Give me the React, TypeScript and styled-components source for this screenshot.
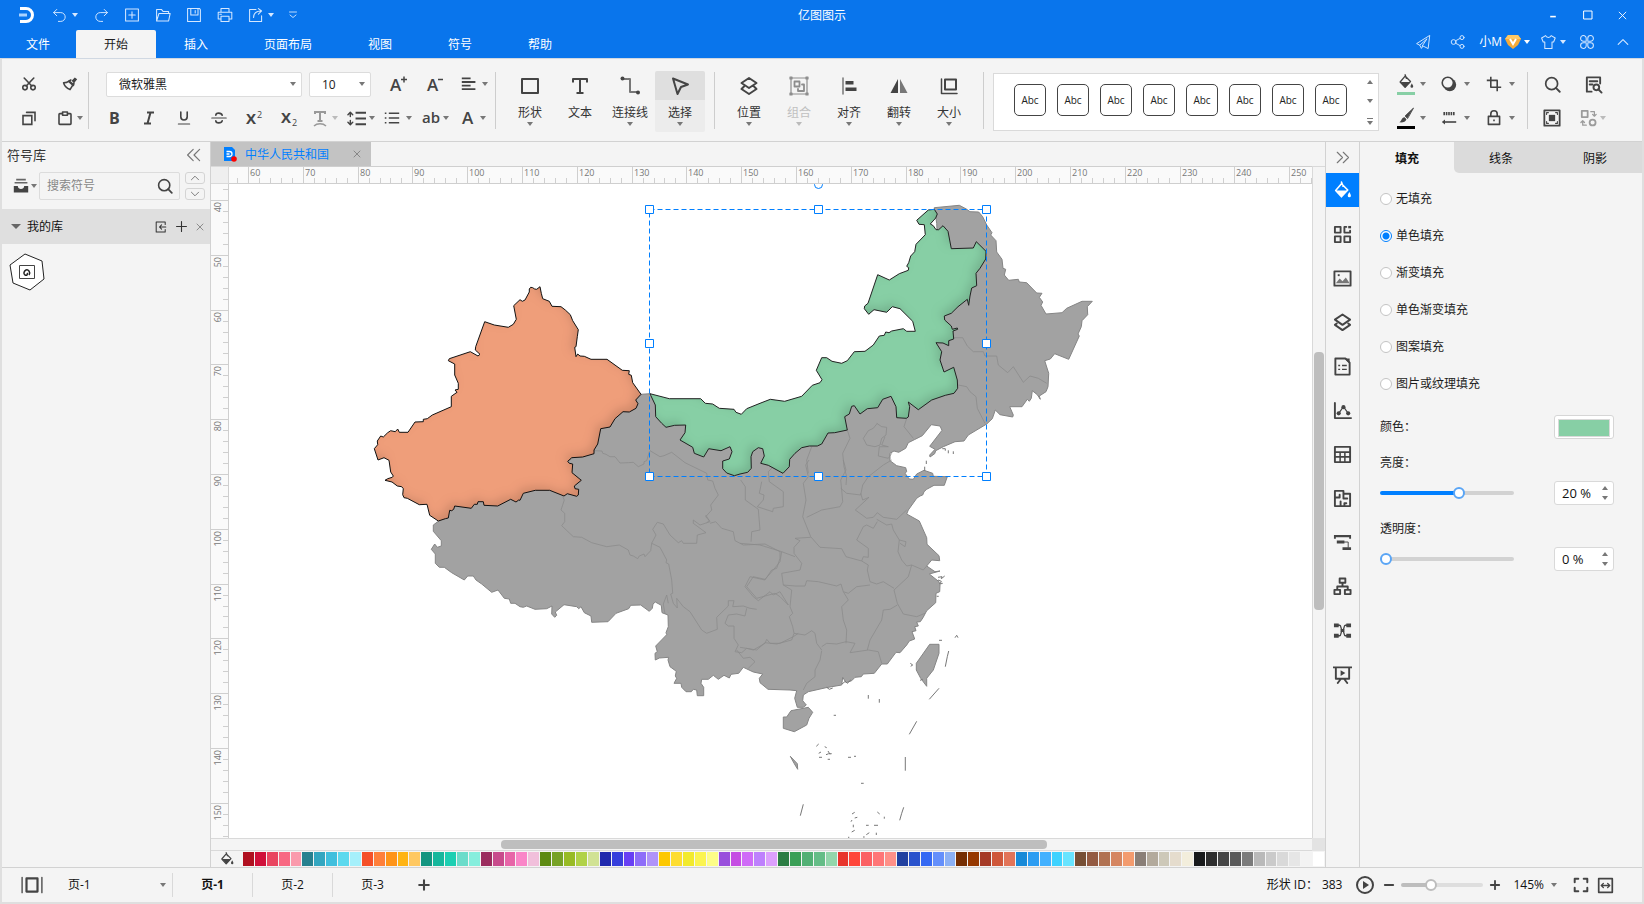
import React, { useLayoutEffect, useRef, useState } from "react";
import styled, { createGlobalStyle, css } from "styled-components";

const INK = "#444";
const LINE = "#d2d2d2";
const PANEL = "#f4f4f4";
const BLUE = "#0975ec";
const ACCENT = "#007fff";

const GlobalStyle = createGlobalStyle`
  * { box-sizing: border-box; }
  body {
    margin: 0;
    background: ${PANEL};
    color: #1c1c1c;
    font: 12px/16px "Open Sans", "Noto Sans CJK SC", sans-serif;
  }
  button, input, select { font: inherit; color: inherit; margin: 0; padding: 0; }
  button { border: 0; background: none; cursor: pointer; }
  svg { display: block; flex: none; }
`;

/* ---------- icons ---------- */

const P = (d: string, extra: React.SVGProps<SVGPathElement> = {}) => <path d={d} {...extra} />;
const solid = { fill: "currentColor", stroke: "none" };

const icons: Record<string, React.ReactNode> = {
  undo: <g strokeWidth="1.2">{P("M6 3 2 7l4 4M2 7h9a5.500 5.500 0 0 1 0 11H8")}</g>,
  redo: <g strokeWidth="1.2">{P("M14 3l4 4-4 4M18 7H9a5.500 5.500 0 0 0 0 11h3")}</g>,
  addBox: <g strokeWidth="1.300">{P("M2 2.500h16v15H2zM10 6v8M6 10h8")}</g>,
  folder: <g strokeWidth="1.300">{P("M2 17.500V3h6l2 2.500h7V8M2 17.500 5 8h14l-2 9.500z")}</g>,
  save: <g strokeWidth="1.300">{P("M2 2h15l1 1.500V18H2zM6 2v8h9V2M11.500 4.500v3")}</g>,
  print: <g strokeWidth="1.300">{P("M5 6V2h10v4M5 15H1.500V6.500h17V15H15M5 11.500h10V18H5zM3.500 9h2")}</g>,
  exportFile: <g strokeWidth="1.300">{P("M10 3H2v15h15v-7M7 13c0-5 3-8 10-8M13 2l4 3-4 4")}</g>,
  more: <g strokeWidth="1.800">{P("M3 4h14M4 10l6 5 6-5")}</g>,
  plane: <g strokeWidth="1.200">{P("M18 2 2 12l4 2 2 4 2-3 6 3zM6 14l9-8-6 9")}</g>,
  share: (
    <g strokeWidth="1.200">
      <circle cx="15" cy="4.500" r="2.500" /><circle cx="4.500" cy="10" r="3" /><circle cx="15" cy="15.500" r="2.500" />
      {P("m7 8.500 5.500-3M7 11.500l5.500 3")}
    </g>
  ),
  shirt: <g strokeWidth="1.300">{P("M7 2 2 5l2 5h2v8h9v-8h2l2-5-5-3c-1 3-6 3-7 0z")}</g>,
  clover: (
    <g strokeWidth="1.300">
      {P("M9 9H5.500A3.500 3.500 0 1 1 9 5.500zM11 9h3.500A3.500 3.500 0 1 0 11 5.500zM9 11H5.500A3.500 3.500 0 1 0 9 14.500zM11 11h3.500A3.500 3.500 0 1 1 11 14.500z")}
    </g>
  ),
  chevUp: <g strokeWidth="1.400">{P("M4 13l6-6 6 6")}</g>,
  chevDown: <g strokeWidth="1.400">{P("M4 7l6 6 6-6")}</g>,
  scissors: (
    <g>
      <circle cx="5" cy="14.500" r="2.800" /><circle cx="15" cy="14.500" r="2.800" />
      {P("M4 2.500 13.500 12.500M16 2.500 6.500 12.500")}
    </g>
  ),
  brush: (
    <g>
      {P("M11 5 6 8l-4 .5c1 4 4 7 8 8.500l5-8")}
      {P("M9 5l7 6-2 2-7-6zM12 6l4-4 3 2-4 5z", solid)}
    </g>
  ),
  copy: <g>{P("M2.500 7h11v11h-11zM7 3h10.500v10.500", { strokeLinejoin: "miter" })}</g>,
  paste: <g>{P("M6 4.500H3.500a1 1 0 0 0-1 1V17a1 1 0 0 0 1 1h13a1 1 0 0 0 1-1V5.500a1 1 0 0 0-1-1H14M7 2.500h6v4H7z")}</g>,
  strike: (
    <g>
      {P("M14 6.500C13 3 6 3 6 6.500M14 13.500C13 17 6 17 6 13.500")}
      {P("M1 10h18", { strokeWidth: 1.500 })}
    </g>
  ),
  underline: <g>{P("M6 2.500v6a4 4 0 0 0 8 0v-6")}{P("M3 17.500h14", { strokeWidth: 1.500 })}</g>,
  alignText: <g strokeWidth="2.200" strokeLinecap="butt">{P("M1 3h11M1 7.500h17M1 12h11M1 16.500h17")}</g>,
  spacing: <g>{P("M9 4h11M9 10h11M9 16h11", { strokeLinecap: "butt" })}{P("M3.500 4v4M3.500 12v4M1 6l2.500-2.500L6 6M1 14l2.500 2.500L6 14", { strokeWidth: 1.500 })}</g>,
  list: <g>{P("M6 4h13M6 10h13M6 16h13", { strokeLinecap: "butt" })}{P("M1 4h2M1 10h2M1 16h2", { strokeLinecap: "butt" })}</g>,
  shape: <g>{P("M2 3h16v14H2z")}</g>,
  letterT: <g strokeLinecap="butt">{P("M3 6.500V3h14v3.500M10 3v14M6.500 17h7")}</g>,
  connector: (
    <g>
      {P("M4 3h6v13h7", { stroke: "#777", strokeDasharray: "3 1 30" })}
      <circle cx="2.500" cy="2.500" r="2" {...solid} /><circle cx="18" cy="16.500" r="2" {...solid} />
    </g>
  ),
  cursor: <g>{P("M3 2.500 18 8.500l-7 2.500-3.500 7z")}</g>,
  layers: <g>{P("M10 2l7.500 5L10 12 2.500 7zM5 10.500 2.500 13l7.500 5 7.500-5-2.500-2.500")}</g>,
  stack: <g>{P("M10 1.500 18 7l-8 5.500L2 7zM4 11l-2 1.500 8 5.500 8-5.500-2-1.500")}</g>,
  group: (
    <g strokeWidth="1.200">
      {P("M2 2h16v16H2zM1 1h2v2H1zM17 1h2v2h-2zM1 17h2v2H1zM17 17h2v2h-2z")}
      {P("M5.500 5.500h5v5h-5zM13 8.500h2v6.500H9v-2", { strokeWidth: 1.800 })}
    </g>
  ),
  alignObj: <g>{P("M4 2v16", { stroke: "#777", strokeWidth: 1.500 })}{P("M6.500 5h8v3.500h-8zM6.500 11.500h11V15h-11z", solid)}</g>,
  flip: <g>{P("M9 3v14H1.500z", solid)}{P("M11 3v14h7.500z", { fill: "#777", stroke: "none" })}</g>,
  resize: <g>{P("M6 3.500h11v10H6z")}{P("M2.500 3v14.500H18", { strokeWidth: 1.500 })}</g>,
  bucket: (
    <g strokeWidth="1.500">
      {P("M9 2l1.500 4M9 3.500 3.500 10l5.500 6 6-6.500L9.500 4")}
      {P("M4 10h10.500L9 16z", solid)}{P("M16.500 11.500c1 2 1.500 2.500 1.500 3.500a1.500 1.500 0 0 1-3 0c0-1 .5-1.500 1.500-3.500z", solid)}
    </g>
  ),
  shadow: <g><circle cx="11" cy="11" r="8" {...solid} /><circle cx="8.500" cy="8.500" r="7" fill={PANEL} /></g>,
  crop: <g strokeLinecap="butt">{P("M6 1v13h13M1 5.500h13V19")}</g>,
  pen: <g>{P("M18 1.500 9 10l2.500 2.500z", { fill: "currentColor", strokeWidth: 1 })}{P("M8.500 11.500l2 2c-1 3-4 4-8 3.500 3-1 2-5 6-5.500z", solid)}</g>,
  lineStyle: <g strokeLinecap="butt">{P("M3 4.500h15", { strokeDasharray: "2 1", strokeWidth: 4 })}{P("M4 15h15")}{P("M1 15l4-3v6z", solid)}</g>,
  lock: <g>{P("M3 8h14v10H3zM6 8V5a4 4 0 0 1 8 0v3")}{P("M9 12h2v2H9z", solid)}</g>,
  search: <g><circle cx="9" cy="9" r="7" />{P("M14 14l4.500 4.500", { strokeWidth: 2.200 })}</g>,
  docSearch: <g>{P("M8 17.500H3v-15h14V9M6 6.500h8M6 10h3")}<circle cx="13" cy="13" r="3" />{P("M15 15l3.500 3.500")}</g>,
  selectAll: <g>{P("M1.500 1.500h17v17h-17z")}{P("M6.500 6.500h7v7h-7z", solid)}{P("M4 6V4h2M14 4h2v2M16 14v2h-2M6 16H4v-2", { strokeWidth: 1.200 })}</g>,
  replace: <g>{P("M2 2h6.500v7H2z")}<circle cx="14" cy="15" r="3.300" />{P("M12 3h4v5M14 6l2 2 2-2M7 18H3v-5M1 15l2-2 2 2", { strokeWidth: 1.400 })}</g>,
  collapse: <g strokeWidth="1.500">{P("M9 3 2 10l7 7M17 3l-7 7 7 7")}</g>,
  expand: <g strokeWidth="1.500">{P("M3 3l7 7-7 7M11 3l7 7-7 7")}</g>,
  tray: <g>{P("M1 10h5c0 5 8 5 8 0h5v8H1z", solid)}{P("M4 2h12M2 6h16", { strokeLinecap: "butt", stroke: "#666" })}</g>,
  importLib: <g strokeWidth="1.700">{P("M17 6V1.500H2v17h15V14M18 10H7.500M11 6.500 7.500 10l3.500 3.500")}</g>,
  plus: <g>{P("M10 1v18M1 10h18")}</g>,
  close: <g strokeWidth="2">{P("M2.500 2.500l15 15M17.500 2.500l-15 15")}</g>,
  symbols: <g>{P("M2 2h6v6H2zM12 2h2M12 2v6h6V6M2 12h6v6H2zM12 12h6v6h-6z")}{P("M16 1h3v2.500h-3z", solid)}</g>,
  image: <g>{P("M1.500 2.500h17v15h-17z")}{P("M3 15l4-5 3 3 3.500-4 4 6z", { fill: "#777", stroke: "none" })}{P("M5 5.500h2v2H5z", solid)}</g>,
  page: <g>{P("M2.500 1.500H13l4.500 4.500v12.500h-15z")}{P("M5.500 9h2M9.500 9h5M5.500 13h2M9.500 13h5", { strokeLinecap: "butt", strokeWidth: 1.500 })}{P("M12 1.500h5.500V7z", solid)}</g>,
  chart: <g>{P("M2 2v16h17")}{P("M6 13l5-7 5 7", { strokeWidth: 1.200 })}<circle cx="6" cy="13" r="2.200" {...solid} /><circle cx="11" cy="6.500" r="2.200" {...solid} /><circle cx="16" cy="13" r="2.200" {...solid} /></g>,
  table: <g>{P("M2 2h16v16H2z")}{P("M2 7.500h16M2 12.500h16M7.500 7.500V18M12.500 7.500V18", { strokeWidth: 1.600 })}</g>,
  plan: <g>{P("M2 2h9v3h7v13H2zM2 9h5V6M11 5v5h4M8 18v-5M12 18v-3h2")}</g>,
  timeline: <g>{P("M1 2h18v4h-2V4.500H3V6H1zM4 8h8v3H4zM10 15h9v3h-9z", solid)}{P("M12 9.500h4V15", { strokeWidth: 1 })}</g>,
  org: <g>{P("M7 1.500h6V6H7zM1.500 13.500h6V18h-6zM12.500 13.500h6V18h-6zM10 6v4M4.500 13v-3h11v3")}</g>,
  mind: <g>{P("M3 4.500h4c2 0 1 5.500 3 5.500s1-5.500 3-5.500h4M3 15.500h4c2 0 1-5.500 3-5.500s1 5.500 3 5.500h4", { strokeWidth: 1.400 })}{P("M1 2.500h5v4H1zM14 2.500h5v4h-5zM1 13.500h5v4H1zM14 13.500h5v4h-5zM8 8.500h4v3H8z", solid)}</g>,
  present: <g>{P("M0 2.500h20M3 2.500v12h14v-12M8 15l-3 4M12 15l3 4")}{P("M8 5.500l5 3-5 3z", solid)}</g>,
  pages: <g>{P("M5 4h10v12H5z")}{P("M1 3v14M19 3v14", { strokeWidth: 1.200 })}</g>,
  play: <g><circle cx="10" cy="10" r="8" />{P("M8 6l6 4-6 4z", solid)}</g>,
  minus: <g strokeWidth="2.600">{P("M4 10h12")}</g>,
  add: <g strokeWidth="2.600">{P("M10 4v12M4 10h12")}</g>,
  full: <g strokeWidth="2.200">{P("M3 7V3h4M13 3h4v4M17 13v4h-4M7 17H3v-4")}</g>,
  fitWidth: <g>{P("M2 2h16v16H2z")}{P("M5 10h10M7.500 7.500 5 10l2.500 2.500M12.500 7.500 15 10l-2.500 2.500", { strokeWidth: 1.600 })}</g>,
  minimise: <g strokeLinecap="butt">{P("M3 14h14", { strokeWidth: 4 })}</g>,
  maximise: <g strokeWidth="2">{P("M2 2h16v16H2z")}</g>,
};

const Glyph = styled.text`
  fill: currentColor;
  stroke: none;
  font-family: "Open Sans", sans-serif;
`;

const LetterBox = styled.svg`
  width: 20px;
  height: 20px;
  overflow: visible;
`;

const Icon = ({ name, size = 16 }: { name: string; size?: number }) => (
  <svg width={size} height={size} viewBox="0 0 20 20" fill="none" stroke="currentColor" strokeWidth="2" strokeLinejoin="round" strokeLinecap="round" aria-hidden="true">
    {icons[name]}
  </svg>
);

const LetterIcon = ({ children }: { children: React.ReactNode }) => (
  <LetterBox viewBox="0 0 20 20" aria-hidden="true">{children}</LetterBox>
);

const Caret = styled.span<{ $up?: boolean; $size?: number }>`
  flex: none;
  width: 0;
  height: 0;
  border: ${(p) => p.$size ?? 3}px solid transparent;
  ${(p) =>
    p.$up
      ? css`border-top: 0; border-bottom: ${p.$size ?? 4}px solid currentColor;`
      : css`border-bottom: 0; border-top: ${p.$size ?? 4}px solid currentColor;`}
`;

/* ---------- header ---------- */

const Page = styled.div`
  min-height: 100vh;
  display: flex;
  flex-direction: column;
`;

const Header = styled.header`
  background: ${BLUE};
  color: #fff;
`;

const TitleRow = styled.div`
  display: grid;
  grid-template-columns: 1fr auto 1fr;
  align-items: center;
  height: 30px;
`;

const AppTitle = styled.span`
  padding-top: 2px;
`;

const QuickBar = styled.div`
  display: flex;
  align-items: center;
  gap: 15px;
  padding-left: 19px;
  color: #d5e8ff;
`;

const QuickButton = styled.button<{ $w?: number }>`
  display: flex;
  align-items: center;
  justify-content: center;
  gap: 4px;
  width: ${(p) => (p.$w ? p.$w + "px" : "auto")};
  height: 20px;
`;

const WindowButtons = styled.div`
  display: flex;
  justify-content: flex-end;
  align-items: center;
  padding-right: 4px;
  height: 28px;
`;

const MenuRow = styled.div`
  display: flex;
  justify-content: space-between;
  height: 28px;
`;

const MenuTabs = styled.nav`
  display: flex;
`;

const MenuTab = styled.button<{ $active?: boolean; $narrow?: boolean }>`
  padding: 2px ${(p) => (p.$narrow ? 26 : 28)}px 0;
  border-radius: 2px 2px 0 0;
  background: ${(p) => (p.$active ? PANEL : "transparent")};
  color: ${(p) => (p.$active ? "#222" : "#fff")};
`;

const UserBar = styled.div`
  display: flex;
  align-items: center;
  gap: 10px;
  padding: 0 6px 4px 0;
  color: #d5e8ff;
`;

const UserButton = styled(QuickButton)`
  gap: 3px;
  color: #fff;
`;

/* ---------- ribbon ---------- */

const Frame = styled.div`
  flex: 1;
  display: flex;
  flex-direction: column;
  border: 2px solid #dfdfdf;
  border-top: 1px solid #d0d8e2;
`;

const Ribbon = styled.div`
  display: flex;
  align-items: flex-start;
  height: 83px;
  padding: 8px 35px 0 17px;
  border-bottom: 1px solid ${LINE};
  color: ${INK};
`;

const Separator = styled.span`
  flex: none;
  width: 1px;
  height: 57px;
  margin-top: 5px;
  background: #cdcdcd;
`;

const ToolGrid = styled.div<{ $cols: string; $gap: number; $pad: string }>`
  display: grid;
  grid-template-columns: ${(p) => p.$cols};
  grid-auto-rows: 34px;
  column-gap: ${(p) => p.$gap}px;
  padding: ${(p) => p.$pad};
  align-items: center;
`;

const FontTools = styled.div`
  padding: 0 7px 0 15px;
`;

const ToolRow = styled.div`
  display: flex;
  align-items: center;
  height: 34px;
`;

const ToolSet = styled.div<{ $gap: number; $left?: number }>`
  display: flex;
  gap: ${(p) => p.$gap}px;
  margin-left: ${(p) => p.$left ?? 0}px;
`;

const ToolButton = styled.button<{ $gap?: number; $off?: boolean }>`
  display: flex;
  align-items: center;
  justify-content: center;
  gap: ${(p) => p.$gap ?? 2}px;
  min-width: 20px;
  height: 24px;
  color: ${(p) => (p.$off ? "#9b9b9b" : INK)};
  ${Caret} { color: ${(p) => (p.$off ? "#bbb" : "#777")}; }
`;

const Swatched = styled.span<{ $bar: string }>`
  display: flex;
  flex-direction: column;
  align-items: center;
  gap: 1px;
  width: 20px;
  &::after { content: ""; width: 18px; height: 3px; background: ${(p) => p.$bar}; }
`;

const SelectBox = styled.label<{ $w: number }>`
  position: relative;
  display: flex;
  align-items: center;
  width: ${(p) => p.$w}px;
  height: 25px;
  margin-left: ${(p) => (p.$w > 100 ? 2 : 7)}px;
  border: 1px solid #dcdcdc;
  border-radius: 2px;
  background: #fff;
  ${Caret} { position: absolute; right: 5px; color: #777; pointer-events: none; }
`;

const Select = styled.select`
  appearance: none;
  width: 100%;
  height: 23px;
  padding: 1px 12px 0;
  border: 0;
  background: transparent;
  color: #222;
`;

const BigTools = styled.div`
  display: flex;
  padding: 4px 9px 0;
`;

const BigButton = styled.button<{ $active?: boolean; $off?: boolean }>`
  display: flex;
  flex-direction: column;
  align-items: center;
  width: 50px;
  height: 61px;
  border-radius: 2px;
  background: ${(p) => (p.$active ? "linear-gradient(#dfdfdf 29px, #ececec 29px)" : "none")};
  color: ${(p) => (p.$off ? "#c0c0c0" : "#333")};
  svg { margin: 5px 0 9px; color: ${(p) => (p.$off ? "#8d8d8d" : INK)}; }
  ${Caret} { margin-top: 1px; color: ${(p) => (p.$off ? "#bbb" : "#777")}; }
`;

const Gallery = styled.div`
  flex: 1;
  display: flex;
  justify-content: space-between;
  height: 58px;
  margin: 6px 16px 0 9px;
  padding: 0 5px 0 20px;
  border: 1px solid #dadada;
  background: #fff;
`;

const GalleryItems = styled.div`
  display: flex;
  align-items: center;
  gap: 11px;
  padding-bottom: 4px;
`;

const StyleItem = styled.button`
  width: 32px;
  height: 32px;
  border: 1px solid ${INK};
  border-radius: 5px;
  background: #fff;
  color: #222;
  font-size: 10px;
`;

const GallerySteps = styled.div`
  display: flex;
  flex-direction: column;
  justify-content: space-between;
  align-items: center;
  padding: 6px 0 5px;
  color: #777;
  button { display: flex; justify-content: center; width: 6px; }
  button:last-child { padding-top: 2px; border-top: 1px solid #777; }
`;

/* ---------- body ---------- */

const Body = styled.div`
  flex: 1;
  display: grid;
  grid-template-columns: 209px minmax(0, 1fr) 35px 282px;
`;

const Library = styled.aside`
  border-right: 1px solid ${LINE};
`;

const LibraryHead = styled.div`
  display: flex;
  align-items: center;
  justify-content: space-between;
  height: 26px;
  padding: 0 8px 0 5px;
  font-size: 13px;
  color: #333;
  button { color: #777; }
`;

const SearchRow = styled.div`
  display: flex;
  align-items: center;
  gap: 2px;
  height: 41px;
  padding: 4px 5px 9px 11px;
`;

const SearchBox = styled.label`
  display: flex;
  align-items: center;
  flex: 1;
  min-width: 0;
  height: 28px;
  margin-right: 3px;
  padding: 0 6px 0 7px;
  border: 1px solid #dcdcdc;
  border-radius: 2px;
  color: ${INK};
  input {
    flex: 1;
    min-width: 0;
    border: 0;
    outline: 0;
    background: none;
  }
  input::placeholder { color: #888; opacity: 1; }
`;

const StepPair = styled.div`
  display: flex;
  flex-direction: column;
  gap: 4px;
  button {
    display: flex;
    align-items: center;
    justify-content: center;
    width: 20px;
    height: 12px;
    border: 1px solid #d4d4d4;
    border-radius: 3px;
    color: #666;
  }
`;

const LibraryBar = styled.div`
  display: flex;
  align-items: center;
  gap: 9px;
  height: 35px;
  padding: 0 6px 0 9px;
  background: #dfdfdf;
  color: #333;
  ${Caret} { color: #666; }
  button:last-child { color: #777; }
`;

const LibraryName = styled.span`
  flex: 1;
  margin-left: -3px;
  color: #111;
`;

const LibraryItem = styled.button`
  display: block;
  margin: 9px 7px;
`;

/* ---------- document ---------- */

const Doc = styled.main`
  display: grid;
  grid-template-columns: 18px minmax(0, 1fr) 13px;
  grid-template-rows: 24px 18px minmax(0, 1fr) 13px 16px;
`;

const DocTabs = styled.div`
  grid-column: 1 / -1;
  display: flex;
`;

const DocTab = styled.div`
  display: flex;
  align-items: center;
  gap: 8px;
  width: 160px;
  padding: 0 9px 0 12px;
  background: #c3c3c3;
  color: ${ACCENT};
  span { flex: 1; padding-top: 1px; }
  button { color: #777; padding: 0 1px; }
`;

const Corner = styled.div`
  border: 1px solid #d9d9d9;
  border-left: 0;
  background: #efefef;
`;

const RulerBox = styled.div`
  min-width: 0;
  min-height: 0;
  overflow: hidden;
  background: #fafafa;
`;

const RulerSvg = styled.svg`
  width: 100%;
  height: 100%;
  stroke: #cfcfcf;
  text { fill: #777; stroke: none; font-size: 9px; font-family: "Open Sans", sans-serif; }
`;

const Sheet = styled.svg`
  width: 100%;
  height: 100%;
  overflow: hidden;
  background: #fff;
`;

const VTrack = styled.div`
  grid-column: 3;
  grid-row: 2 / 4;
  padding: 185px 1px 0;
  border-top: 1px solid #d9d9d9;
  border-left: 1px solid #d9d9d9;
`;

const HTrack = styled.div`
  grid-column: 1 / 3;
  grid-row: 4;
  padding: 1px 0 1px 290px;
  border-top: 1px solid #d9d9d9;
  border-bottom: 1px solid #d9d9d9;
`;

const Thumb = styled.div<{ $w: string; $h: string }>`
  width: ${(p) => p.$w};
  height: ${(p) => p.$h};
  border-radius: 4px;
  background: #bebebe;
`;

const TrackCorner = styled.div`
  grid-column: 3;
  grid-row: 4;
  background: #e3e3e3;
`;

const Palette = styled.div`
  grid-column: 1 / -1;
  display: flex;
  align-items: center;
  gap: 1px;
  padding-right: 1px;
  color: ${INK};
  svg { margin: 0 7px 0 8px; }
`;

const Chip = styled.button<{ $c: string }>`
  flex: 1;
  height: 14px;
  background: ${(p) => p.$c};
`;

/* ---------- right side ---------- */

const Rail = styled.nav`
  display: flex;
  flex-direction: column;
  border: solid ${LINE};
  border-width: 0 1px;
  color: ${INK};
`;

const RailButton = styled.button<{ $kind?: "toggle" | "active" }>`
  display: flex;
  align-items: center;
  justify-content: center;
  height: ${(p) => (p.$kind === "toggle" ? 31 : p.$kind === "active" ? 34 : 44)}px;
  margin-bottom: ${(p) => (p.$kind === "active" ? 5 : 0)}px;
  background: ${(p) => (p.$kind === "active" ? ACCENT : "none")};
  color: ${(p) => (p.$kind === "active" ? "#fff" : p.$kind === "toggle" ? "#777" : INK)};
`;

const PanelTabs = styled.div`
  display: grid;
  grid-template-columns: repeat(3, 1fr);
  height: 31px;
`;

const PanelTab = styled.button<{ $active?: boolean; $first?: boolean }>`
  padding-top: 2px;
  background: ${(p) => (p.$active ? "none" : "#dbdbdb")};
  border-bottom-left-radius: ${(p) => (p.$first ? 5 : 0)}px;
  font-weight: ${(p) => (p.$active ? 700 : 400)};
  color: #111;
`;

const RadioList = styled.div`
  display: flex;
  flex-direction: column;
  gap: 17px;
  padding: 16px 20px 0;
`;

const RadioLabel = styled.label`
  display: flex;
  align-items: center;
  gap: 4px;
  height: 20px;
  input {
    appearance: none;
    width: 12px;
    height: 12px;
    border: 1px solid #c4c4c4;
    border-radius: 50%;
    background: #fff;
  }
  input:checked {
    border-color: ${ACCENT};
    background: radial-gradient(circle, ${ACCENT} 3px, #fff 4px);
  }
`;

const Fields = styled.div`
  display: flex;
  flex-direction: column;
  padding: 21px 28px 0 20px;
`;

const Field = styled.div`
  display: flex;
  align-items: center;
  justify-content: space-between;
  height: 24px;
`;

const FieldLabel = styled.label`
  display: flex;
  align-items: center;
  height: 42px;
  padding-top: 6px;
`;

const ColorButton = styled.button`
  width: 60px;
  height: 24px;
  padding: 3px;
  border: 1px solid #d6d6d6;
  border-radius: 3px;
  background: #fff;
  &::before {
    content: "";
    display: block;
    height: 16px;
    border: 1px solid #d9d9d9;
    background: #87cfa5;
  }
`;

const Range = styled.input<{ $fill: string; $rest: string; $ring: string; $w: number }>`
  appearance: none;
  width: ${(p) => p.$w}px;
  height: 12px;
  background: none;
  &::-webkit-slider-runnable-track {
    height: 4px;
    border-radius: 2px;
    background: linear-gradient(to right, ${(p) => p.$fill} var(--part), ${(p) => p.$rest} var(--part));
  }
  &::-webkit-slider-thumb {
    appearance: none;
    width: 12px;
    height: 12px;
    margin-top: -4px;
    border: 2px solid ${(p) => p.$ring};
    border-radius: 50%;
    background: #fff;
  }
`;

const SpinBox = styled.div`
  display: flex;
  justify-content: space-between;
  width: 60px;
  height: 24px;
  padding: 0 5px 0 7px;
  border: 1px solid #d9d9d9;
  border-radius: 3px;
  background: #fff;
  input { width: 34px; border: 0; background: none; font-size: 13px; color: #111; outline: 0; }
  div { display: flex; flex-direction: column; justify-content: space-between; padding: 4px 0; color: #777; }
  button { display: flex; }
`;

/* ---------- status bar ---------- */

const Status = styled.footer`
  display: flex;
  align-items: center;
  height: 35px;
  padding: 0 28px 0 19px;
  border-top: 1px solid ${LINE};
  color: #111;
`;

const PageSelect = styled.label`
  position: relative;
  display: flex;
  align-items: center;
  width: 130px;
  height: 24px;
  border-right: 1px solid #d9d9d9;
  ${Caret} { position: absolute; right: 6px; color: #777; pointer-events: none; }
  select { appearance: none; width: 100%; padding-left: 25px; border: 0; background: none; }
`;

const PageTab = styled.button<{ $active?: boolean; $last?: boolean }>`
  width: 80px;
  height: 24px;
  border-right: 1px solid ${(p) => (p.$last ? "transparent" : "#d9d9d9")};
  font-weight: ${(p) => (p.$active ? 700 : 400)};
`;

const PlainButton = styled.button<{ $before?: number; $after?: number }>`
  display: flex;
  align-items: center;
  margin: 0 ${(p) => p.$after ?? 0}px 0 ${(p) => p.$before ?? 0}px;
  color: ${INK};
`;

const StatusRight = styled.div`
  display: flex;
  align-items: center;
  gap: 5px;
  margin-left: auto;
  ${Caret} { color: #777; }
`;

const ShapeId = styled.span`
  display: flex;
  gap: 4px;
  margin-right: 8px;
`;

const ZoomValue = styled.button`
  display: flex;
  align-items: center;
  gap: 7px;
  margin: 0 10px 0 6px;
`;

/* ---------- map ---------- */

type Section = [number, number, string];

/* Each section lists points in thirds of a pixel, counted from its own origin. */
const toPath = (sections: Section[], close = true) =>
  sections
    .flatMap(([ox, oy, pts]) =>
      pts.trim().split(/\s+/).map((p) => {
        const [x, y] = p.split(",").map(Number);
        return `${(ox + x / 3).toFixed(1)} ${(oy + y / 3).toFixed(1)}`;
      })
    )
    .reduce((d, p, i) => d + (i ? "L" : "M") + p, "") + (close ? "Z" : "");

const west = (s: string): Section => [360, 190, s];
const north = (s: string): Section => [740, 190, s];
const southWest = (s: string): Section => [400, 480, s];
const southEast = (s: string): Section => [740, 460, s];

const xinjiang = toPath([
  west(`508,297 512,292 518,293 524,297 530,298 540,290 544,310 548,326 568,334 576,349 603,350 616,360 631,374 638,392 655,419 652,440 648,470 644,472 648,500 653,492 660,498 673,499 693,508 741,508 787,541 808,542 806,553 814,556 818,578 843,613 827,630 834,641 828,655 808,666 789,665 765,686 750,711 722,716 713,762 702,780 702,791 668,801 635,803 623,814 628,820 638,822 636,848 664,871 643,888 645,896 656,898 655,915 650,919 622,911 612,918 569,901 526,901 490,910 480,931 476,930 468,936 452,928 413,948 372,946 370,935 354,935 352,943 343,943 334,955 284,948 281,958 275,962 269,961 265,984 256,986 235,993 209,976 201,943 178,944 142,925 132,923 128,914 130,896 125,890 112,888 96,876 75,871 83,866 97,862 100,858 92,846 87,811 72,803 54,810 43,776 53,764 52,753 62,738 70,741 83,728 92,722 106,725 113,717 118,727 144,727 165,696 190,695 190,688 202,686 217,675 274,650 274,619 291,607 285,600 295,598 295,580 284,555 284,522 265,512 268,506 331,485 354,498 360,493 346,480 347,470 374,395 403,405 445,412 460,403 469,388 461,347 480,329 487,334 495,330 508,306`),
]);

const innerMongolia = toPath([
  west(`870,611 928,626 1022,626 1036,640 1058,642 1078,655 1122,658 1128,667 1144,673 1160,656 1200,640`),
  north(`91,628 134,634 185,619 217,586 240,578 246,569 229,541 245,503 260,503 276,514 305,520 322,512 343,485 375,484 400,465 418,438 433,436 437,426 447,428 455,423 490,416 500,424 526,424 518,394 480,356 457,350 440,367 402,359 386,373 373,356 374,348 384,340 413,254 448,270 478,251 505,241 506,233 500,229 506,218 512,198 524,185 528,163 556,134 553,104 537,103 530,91 565,60 583,58 592,72 587,84 571,102 580,107 588,119 596,119 609,107 624,124 634,176 700,174 709,155 738,184 737,207 720,235 708,250 710,287 695,294 690,318 686,346 682,328 654,350 634,370 613,378 614,390 634,408 637,418 652,414 653,418 639,423 641,447 626,452 626,467 609,459 588,458 605,485 600,510 612,546 641,532 652,570 653,595 642,610 616,616 575,630 535,659 505,636 509,650 505,681 499,685 470,683 468,650 453,619 428,628 413,653 382,656 360,672 343,647 335,649 328,672 314,680 322,720 284,728 264,729 245,762 232,768 208,768 185,773 165,790 149,808 148,830 129,850 120,845 85,826 62,820 73,798 68,776 55,773 38,785 33,800 34,835 23,847 0,852`),
  west(`1123,857 1100,849 1088,836 1088,813 1108,807 1116,785 1110,770 1083,782 1046,776 1031,801 1003,790 998,772 960,750 975,728 977,705 944,706 918,712 905,700 887,680 886,645 872,616`),
]);

const mainland = toPath([
  west(`843,613 870,611 890,640`),
  north(`60,720 300,600 500,500 600,300 590,100 583,53 658,46 679,57 690,65 716,66 728,80 740,105 756,128 752,135 768,152 770,186 786,208 789,235 797,238 793,255 806,271 835,268 838,276 860,278 890,309 906,310 898,322 908,336 903,346 918,372 966,368 980,355 1026,334 1057,334 1042,350 1043,374 1026,392 1024,410 1014,432 1018,438 988,504 986,508 944,491 931,507 914,512 926,550 924,590 918,605 898,618 901,628 892,614 877,602 874,625 868,634 862,628 846,650 809,650 820,675 818,681 780,674 766,660 757,686 740,702 685,735 672,753 645,755 610,770 587,782 584,791 570,801 569,795 585,778 569,769 606,721 600,708 574,704 547,737 523,749 505,758 497,775 476,787 462,783 450,790 450,812 470,827 497,833 500,845 495,850 508,867 520,868 530,852 552,841 578,850 580,859 622,860 613,886 582,886 560,898 552,905 548,915 540,918 530,925 505,960`),
  southEast(`500,162 538,183 560,233 561,253 597,287 599,302 575,300 560,318 585,335 600,333 568,342 597,365 600,375 599,395 588,400 587,428 560,452 549,473 541,485 530,486 535,498 524,500 528,512 516,515 524,537 508,543 500,555 480,578 468,577 442,612 425,612 403,640 370,642 364,650 345,652 335,662 318,668 308,652 305,675 258,683 205,695 190,705 188,722 199,735 190,742 172,742 164,715 170,692 150,690 84,688 60,668 58,655 68,642 40,636 10,622`),
  southWest(`1030,562 1016,580 993,583 988,594 972,586 955,598 940,586 925,598 905,598 903,610 911,622 911,647 892,647 890,630 880,628 874,635 858,635 845,622 843,610 822,610 830,595 826,588 829,574 810,560 804,540 806,532 778,534 766,540 765,520 772,515 767,498 800,464 798,458 805,440 804,405 786,398 784,376 766,366 759,372 757,385 748,394 722,375 692,376 686,386 648,400 624,425 575,427 573,408 553,398 543,380 536,386 530,380 492,374 466,396 470,406 464,412 455,402 456,378 440,386 405,388 380,378 370,382 360,380 345,370 332,370 328,357 313,355 294,330 275,337 245,312 228,300 220,288 203,288 193,300 155,278 133,262 118,262 106,250 106,222 94,208 104,192 112,202 124,198 124,182 100,154 100,135 115,124`),
  west(`300,920 600,870 620,818 690,760 780,640`),
]);

const islands = [
  southEast(`569,553 597,553 597,580 580,630 560,655 560,679 542,655 529,630 529,610`),
  southEast(`130,771 140,771 153,752 205,742 218,757 207,775 200,795 163,815 130,805`),
  southEast(`151,889 172,911 173,928 163,911`),
].map((s) => toPath([s]));

const provinceBorders = [
  west(`702,782 726,783 728,790 738,793 750,800 765,800 780,819 805,818 820,817 835,830 852,822 852,815 860,812 868,785 870,782 900,800 912,797 935,787 975,818 1040,850 1043,870 1058,873 1065,895 1075,915 1052,945 1055,960 1037,980 1048,992 1040,998`),
  southWest(`917,105 930,125 900,135 880,120 880,130 918,158 892,165 890,190 850,190 845,182 835,188 810,165 790,132 772,127 758,148 768,165 755,190 752,212 735,230 732,222 718,228 713,236 700,228 690,225 685,210 658,195 620,200 575,188 545,172 520,170 485,137 494,125 494,100 483,90 493,60 488,50`),
  southWest(`755,190 780,202 800,240 798,248 806,252 815,300 818,340 812,342 820,370 832,384 830,355 850,380 870,395 905,450 920,460 952,448 950,412 985,378 985,362 1002,362 998,380 1030,378 1050,385 1070,388`),
  southWest(`805,370 800,345 790,372 795,402`),
  southWest(`1040,385 1035,408 1010,402 985,405 975,430 985,438 1002,438 1002,475 1015,495 1005,515 1025,518 1040,505 1060,510 1095,490 1100,478 1110,490 1140,490 1180,470 1195,460`),
  southWest(`1010,510 1030,535 1050,532 1065,545 1045,565`),
  southWest(`930,130 947,125 965,145 1000,155 1005,182 1030,195 1095,192 1140,215 1140,235 1130,265 1115,270 1095,300 1050,290 1035,320 1060,350 1075,362 1110,335 1120,345 1140,335 1165,375`),
  southWest(`1022,0 1036,20 1036,60 1075,88 1080,150 1055,155 1053,185`),
  southEast(`65,65 58,100 72,105 70,120 52,140 98,155 100,145 130,140 130,95 88,65 85,35 100,20`),
  southEast(`207,0 197,15 205,50 190,70 198,120 188,170 212,230 240,262 305,266 318,290 365,303 370,290 385,292 385,265 350,240 370,200 380,195 400,205 412,185`),
  southEast(`310,0 318,30 302,60 305,90 308,125 300,140 245,150 200,172`),
  southEast(`302,85 320,100 362,105 368,75 385,50 430,15 455,0`),
  southEast(`362,100 368,120 387,112 346,150 380,175 400,172 412,158 430,172 470,178 500,150`),
  southEast(`410,178 440,195 455,192 460,210 478,240 474,275 485,300 500,318 515,315 550,330 560,318`),
  southEast(`478,240 498,245 495,260 480,250`),
  southEast(`515,315 505,350 462,390 472,430 490,462 530,470 555,460`),
  southEast(`365,303 385,315 382,330 390,365 410,372 430,365 462,385`),
  southEast(`212,232 165,235 180,242 162,262 162,280 185,310 180,330 125,340 130,375 165,378 195,378 200,362 235,365 290,378 303,372 310,395 325,400 350,380 390,375`),
  southEast(`130,375 155,390 150,440 158,460 148,470 158,500 162,520 195,525 215,512 225,520 230,550 245,570`),
  southEast(`310,395 325,420 305,440 310,480 320,510 318,550`),
  southEast(`245,560 260,550 290,552 318,545 345,550 330,578 385,570 415,575 425,610`),
  southEast(`472,435 450,448 430,450 425,480 390,540 382,570`),
  southEast(`245,572 240,600 225,630 225,650 200,670 190,690`),
  southEast(`0,562 50,570 75,548 110,552 155,540 162,520`),
  southEast(`125,275 120,305 100,330 75,358 40,350 20,380 50,415 105,400 120,410 145,435`),
  southEast(`0,250 60,255 125,275 165,290`),
  north(`640,443 668,443 682,468 700,485 730,485 735,498 770,498 775,525 803,548 820,530 850,577 870,558 895,565 920,580`),
  north(`655,585 680,590 690,605 708,620 712,655 735,700`),
  north(`500,685 492,710 520,745`),
  north(`410,700 425,710 440,712 438,735 425,745 420,765 405,770 380,765 370,745 385,722 400,715 412,700`),
  north(`435,740 425,765 445,770 418,770 415,798 445,805 455,790`),
  north(`322,720 330,745 308,790 312,830 320,860 318,885`),
  north(`215,770 200,810 205,850`),
].map((s) => toPath([s], false));

const islets = [
  southEast(`626,573 622,590 616,620`), southEast(`597,685 568,718`), southEast(`530,784 508,823`),
  southEast(`496,891 496,932`), southEast(`491,1042 485,1060 479,1081`), southEast(`190,1033 181,1067`),
  southEast(`645,533 650,526 654,533`), southEast(`597,541 606,541`), southEast(`385,705 385,716`),
  southEast(`418,717 418,728`), southEast(`281,766 288,766`), southEast(`229,859 236,852`),
  southEast(`254,860 260,863`), southEast(`236,880 243,876`), southEast(`237,892 246,892`),
  southEast(`258,884 266,881 275,881`), southEast(`264,873 270,883`), southEast(`263,898 270,898`),
  southEast(`324,892 333,892`), southEast(`342,889 348,889`), southEast(`363,970 371,970`),
  southEast(`336,1062 344,1057`), southEast(`344,1074 352,1072`), southEast(`333,1085 336,1080`),
  southEast(`340,1094 340,1102`), southEast(`412,1056 419,1062`), southEast(`433,1070 433,1076`),
  southEast(`378,1096 386,1096`), southEast(`402,1096 414,1096`), southEast(`335,1116 344,1111`),
  southEast(`409,1118 409,1125`), southEast(`369,1131 374,1131`), southEast(`379,1124 388,1118`),
  southEast(`324,1132 328,1132`), southEast(`511,610 518,615 512,619`), southEast(`540,661 548,658`),
  southEast(`594,352 606,350 604,356 614,348`), southEast(`594,360 604,364 600,372 608,370`),
  southEast(`590,409 596,409`), southEast(`306,672 316,664 322,670 332,660`), southEast(`260,682 268,688 278,684`),
  north(`607,776 616,776 616,782`), north(`625,781 625,790`), north(`640,784 640,792`),
  north(`559,812 559,822`), north(`554,830 554,842`),
].map((s) => toPath([s], false));

const HANDLES: [number, number][] = [
  [649, 209], [818, 209], [986, 209], [649, 343], [986, 343], [649, 476], [818, 476], [986, 476],
];

const MapDrawing = () => (
  <Sheet role="img" aria-label="中华人民共和国">
    <defs>
      <filter id="innerShade" x="-5%" y="-5%" width="110%" height="110%">
        <feGaussianBlur in="SourceAlpha" stdDeviation="5" />
        <feOffset dx="-4" dy="-4" result="soft" />
        <feComposite in="SourceAlpha" in2="soft" operator="out" result="rim" />
        <feFlood floodColor="#000" floodOpacity="0.26" />
        <feComposite in2="rim" operator="in" result="shade" />
        <feMerge>
          <feMergeNode in="SourceGraphic" />
          <feMergeNode in="shade" />
        </feMerge>
      </filter>
    </defs>
    <g transform="translate(-229 -184)" strokeLinejoin="round" fill="none">
      <g fill="#a2a2a2" stroke="#858585">
        <path d={mainland} />
        {islands.map((d, i) => <path key={i} d={d} />)}
      </g>
      <g stroke="#8b8b8b" strokeWidth="0.8">{provinceBorders.map((d, i) => <path key={i} d={d} />)}</g>
      <g stroke="#777">{islets.map((d, i) => <path key={i} d={d} />)}</g>
      <path d={xinjiang} fill="#ef9e7a" filter="url(#innerShade)" />
      <path d={xinjiang} stroke="#111" />
      <path d={innerMongolia} fill="#87cfa5" filter="url(#innerShade)" />
      <path d={innerMongolia} stroke="#222" />
      <g stroke={ACCENT}>
        <rect x="649.5" y="209.5" width="337" height="267" strokeDasharray="5 3" />
        <circle cx="818.500" cy="184.500" r="4" fill="#fff" />
        {HANDLES.map(([x, y]) => (
          <rect key={`${x}-${y}`} x={x - 3.5} y={y - 3.5} width="8" height="8" fill="#fff" />
        ))}
      </g>
    </g>
  </Sheet>
);

/* ---------- rulers ---------- */

const STEP = 10.96;

const Ruler = ({ vertical }: { vertical?: boolean }) => {
  const box = useRef<HTMLDivElement>(null);
  const [length, setLength] = useState(0);
  useLayoutEffect(() => {
    const el = box.current!;
    const measure = () => setLength(vertical ? el.clientHeight : el.clientWidth);
    measure();
    window.addEventListener("resize", measure);
    return () => window.removeEventListener("resize", measure);
  }, [vertical]);

  const start = vertical ? 16 : 19;
  const first = vertical ? 40 : 60;
  const count = Math.floor((length - start) / STEP) + 2;
  const ticks = Array.from({ length: Math.max(0, count) }, (_, i) => i - 1);
  return (
    <RulerBox ref={box}>
      <RulerSvg aria-hidden="true">
        {vertical ? <path d={`M17.5 0V${length}`} /> : <path d={`M0 .5H${length}M0 17.5H${length}`} />}
        {ticks.map((i) => {
          const at = Math.round(start + i * STEP) + 0.5;
          const from = i % 5 === 0 ? 0 : 12;
          return <path key={i} d={vertical ? `M${from} ${at}H18` : `M${at} ${from}V18`} />;
        })}
        {ticks.filter((i) => i >= 0 && i % 5 === 0 && start + i * STEP + 20 < length).map((i) => {
          const at = Math.round(start + i * STEP);
          const label = first + i * 2;
          return vertical ? (
            <text key={i} transform={`translate(10 ${at + 2}) rotate(-90)`} textAnchor="end">{label}</text>
          ) : (
            <text key={i} x={at + 2} y="10">{label}</text>
          );
        })}
      </RulerSvg>
    </RulerBox>
  );
};

/* ---------- data ---------- */

const MENUS = ["文件", "开始", "插入", "页面布局", "视图", "符号", "帮助"];
const RAIL: [string, string][] = [
  ["symbols", "符号"], ["image", "图片"], ["stack", "图层"], ["page", "页面"], ["chart", "图表"], ["table", "表格"],
  ["plan", "平面图"], ["timeline", "时间线"], ["org", "组织结构"], ["mind", "思维导图"], ["present", "演示"],
];
const FILLS = ["无填充", "单色填充", "渐变填充", "单色渐变填充", "图案填充", "图片或纹理填充"];
const SWATCHES = (
  "b01020 d0103a e94560 f86882 fa9aac 27808f 33a6c0 40bfdd 5cd9ee a5f0fb f55028 ff7f3a ff9418 ffb414 ffc861 " +
  "139580 16b79c 1ccfb2 6bdcca 86eedd 9b2c5e c84b8c e765a8 fa86c8 f1bfdb 5d8a12 77a226 98bb25 b1d248 d1e294 " +
  "1f28ad 363fdc 683ff4 8e6df9 b093f9 fdc800 fedd30 f2ea2c fbf44f fdfd88 994fdc c54de3 cf6bf7 be80fd dca0fd " +
  "2b7d43 3a9f56 52b074 65bd87 93d6ab e8342c ff463a fb6063 ff7677 ff9088 2140a0 2952cc 3569f3 648ffb 8bb0f5 " +
  "752e03 963800 a53a26 cf573a e27458 188ad8 2c9df2 42b1ff 3ed2ff 68e4ff 774f35 945b42 b17252 d58560 f39b6e " +
  "8a7f77 b3aa9c cdc8b8 e5dccd f3eedc 191a1b 2e2e2e 454545 5a5a5a 7b7b7b b9b9b9 cacaca d9d9d9 e6e6e6 f3f3f3 ffffff"
).split(" ");

const Tool = ({ label, icon, caret, off, gap, children }: {
  label: string; icon?: string; caret?: boolean; off?: boolean; gap?: number; children?: React.ReactNode;
}) => (
  <ToolButton aria-label={label} $off={off} $gap={gap}>
    {icon ? <Icon name={icon} size={16} /> : children}
    {caret && <Caret />}
  </ToolButton>
);

const Big = ({ label, icon, caret = true, active, off }: {
  label: string; icon: string; caret?: boolean; active?: boolean; off?: boolean;
}) => (
  <BigButton $active={active} $off={off}>
    <Icon name={icon} size={20} />
    {label}
    {caret && <Caret />}
  </BigButton>
);

const Amount = ({ id, label, value, position, onChange }: {
  id: string; label: string; value: number; position: number; onChange: (n: number) => void;
}) => (
  <>
    <FieldLabel htmlFor={id}>{label}</FieldLabel>
    <Field>
      <Range
        id={id} type="range" min={0} max={100} value={position} onChange={(e) => onChange(Number(e.target.value))}
        $fill={ACCENT} $rest="#d2d2d2" $ring="#5aa5f5" $w={134}
        style={{ "--part": `${position}%` } as React.CSSProperties}
      />
      <SpinBox>
        <input aria-label={label} value={`${value} %`} readOnly />
        <div>
          <button aria-label="增加"><Caret $up /></button>
          <button aria-label="减少"><Caret /></button>
        </div>
      </SpinBox>
    </Field>
  </>
);

const Logo = () => (
  <svg width="18" height="18" viewBox="0 0 18 18" fill="none" stroke="#fff" strokeWidth="3" aria-hidden="true">
    <path d="M1 2.500h6a6.500 6.500 0 0 1 0 13H1" />
    <path d="M0 9h8" stroke="#a9d2ff" />
  </svg>
);

export default function App() {
  const [fill, setFill] = useState(1);
  const [light, setLight] = useState(60);
  const [alpha, setAlpha] = useState(0);
  const [zoom, setZoom] = useState(33);

  return (
    <Page>
      <GlobalStyle />
      <Header>
        <TitleRow>
          <QuickBar>
            <Logo />
            <QuickButton aria-label="撤销"><Icon name="undo" /><Caret /></QuickButton>
            <QuickButton aria-label="重做"><Icon name="redo" /></QuickButton>
            <QuickButton aria-label="新建"><Icon name="addBox" /></QuickButton>
            <QuickButton aria-label="打开"><Icon name="folder" /></QuickButton>
            <QuickButton aria-label="保存"><Icon name="save" /></QuickButton>
            <QuickButton aria-label="打印"><Icon name="print" /></QuickButton>
            <QuickButton aria-label="导出"><Icon name="exportFile" /><Caret /></QuickButton>
            <QuickButton aria-label="更多" $w={8}><Icon name="more" size={10} /></QuickButton>
          </QuickBar>
          <AppTitle>亿图图示</AppTitle>
          <WindowButtons>
            <QuickButton $w={35} aria-label="最小化"><Icon name="minimise" size={8} /></QuickButton>
            <QuickButton $w={35} aria-label="最大化"><Icon name="maximise" size={10} /></QuickButton>
            <QuickButton $w={35} aria-label="关闭"><Icon name="close" size={9} /></QuickButton>
          </WindowButtons>
        </TitleRow>
        <MenuRow>
          <MenuTabs>
            {MENUS.map((m, i) => <MenuTab key={m} $active={i === 1} $narrow={i === 0}>{m}</MenuTab>)}
          </MenuTabs>
          <UserBar>
            <QuickButton $w={28} aria-label="发送"><Icon name="plane" /></QuickButton>
            <QuickButton $w={22} aria-label="分享"><Icon name="share" /></QuickButton>
            <UserButton>
              小M
              <svg width="16" height="16" viewBox="0 0 16 16" aria-hidden="true">
                <path d="M3 1h10l3 4-3 6-5 4-5-4-3-6z" fill="#f6ab3a" />
                <path d="M3 1h10l3 4H0z" fill="#ffc864" />
                <path d="M5 5l3 5 3-5" fill="none" stroke="#fff" strokeWidth="2" />
              </svg>
              <Caret />
            </UserButton>
            <QuickButton aria-label="皮肤"><Icon name="shirt" /><Caret /></QuickButton>
            <QuickButton $w={22} aria-label="应用"><Icon name="clover" /></QuickButton>
            <QuickButton $w={30} aria-label="收起"><Icon name="chevUp" /></QuickButton>
          </UserBar>
        </MenuRow>
      </Header>

      <Frame>
        <Ribbon>
          <ToolGrid $cols="20px 28px" $gap={17} $pad="0 4px 0 0">
            <Tool label="剪切" icon="scissors" />
            <Tool label="格式刷" icon="brush" />
            <Tool label="复制" icon="copy" />
            <Tool label="粘贴" icon="paste" caret gap={4} />
          </ToolGrid>
          <Separator />
          <FontTools>
            <ToolRow>
              <SelectBox $w={196}><Select aria-label="字体"><option>微软雅黑</option></Select><Caret /></SelectBox>
              <SelectBox $w={62}><Select aria-label="字号"><option>10</option></Select><Caret /></SelectBox>
              <ToolSet $gap={17} $left={16}>
                <Tool label="增大字号">
                  <LetterIcon><Glyph x="3" y="17" fontSize="17" fontWeight="600">A</Glyph><path d="M14 5.500h6M17 2.500v6" stroke={INK} strokeWidth="1.500" /></LetterIcon>
                </Tool>
                <Tool label="减小字号">
                  <LetterIcon><Glyph x="3" y="17" fontSize="17" fontWeight="600">A</Glyph><path d="M14 5.500h5" stroke={INK} strokeWidth="1.500" /></LetterIcon>
                </Tool>
                <Tool label="对齐文本" icon="alignText" caret gap={5} />
              </ToolSet>
            </ToolRow>
            <ToolRow>
              <ToolSet $gap={15}>
                <Tool label="加粗"><LetterIcon><Glyph x="5" y="16" fontSize="16" fontWeight="700">B</Glyph></LetterIcon></Tool>
                <Tool label="斜体">
                  <LetterIcon><path d="M8 4.500h7M5 15.500h7M11.500 4.500l-3 11" stroke={INK} strokeWidth="2" /></LetterIcon>
                </Tool>
                <Tool label="下划线" icon="underline" />
                <Tool label="删除线" icon="strike" />
                <Tool label="上标"><LetterIcon><Glyph x="2" y="16" fontSize="15" fontWeight="700">X</Glyph><Glyph x="13" y="10" fontSize="9">2</Glyph></LetterIcon></Tool>
                <Tool label="下标"><LetterIcon><Glyph x="2" y="15" fontSize="15" fontWeight="700">X</Glyph><Glyph x="13" y="18" fontSize="9">2</Glyph></LetterIcon></Tool>
              </ToolSet>
              <ToolSet $gap={9} $left={11}>
                <Tool label="文字路径" caret off>
                  <LetterIcon><path d="M5 6V4h10v2M10 4v9M7.500 13h5" fill="none" stroke="#999" strokeWidth="2" /><path d="M4 18c3-3 9-3 12 0" fill="none" stroke="#999" strokeWidth="1.500" /></LetterIcon>
                </Tool>
                <Tool label="行距" caret gap={3}><Icon name="spacing" size={19} /></Tool>
                <Tool label="项目符号" caret gap={6} icon="list" />
                <Tool label="大小写" caret><LetterIcon><Glyph x="1" y="15" fontSize="15" fontWeight="600">ab</Glyph></LetterIcon></Tool>
                <Tool label="字体颜色" caret><LetterIcon><Glyph x="4" y="16" fontSize="17" fontWeight="600">A</Glyph></LetterIcon></Tool>
              </ToolSet>
            </ToolRow>
          </FontTools>
          <Separator />
          <BigTools>
            <Big label="形状" icon="shape" />
            <Big label="文本" icon="letterT" caret={false} />
            <Big label="连接线" icon="connector" />
            <Big label="选择" icon="cursor" active />
          </BigTools>
          <Separator />
          <BigTools>
            <Big label="位置" icon="layers" />
            <Big label="组合" icon="group" off />
            <Big label="对齐" icon="alignObj" />
            <Big label="翻转" icon="flip" />
            <Big label="大小" icon="resize" />
          </BigTools>
          <Separator />
          <Gallery>
            <GalleryItems>
              {Array.from({ length: 8 }, (_, i) => <StyleItem key={i}>Abc</StyleItem>)}
            </GalleryItems>
            <GallerySteps>
              <button aria-label="上一行"><Caret $up /></button>
              <button aria-label="下一行"><Caret /></button>
              <button aria-label="展开样式"><Caret /></button>
            </GallerySteps>
          </Gallery>
          <ToolGrid $cols="31px 31px 31px" $gap={14} $pad="0 11px 0 0">
            <Tool label="填充" caret gap={4}><Swatched $bar="#87cfa5"><Icon name="bucket" size={18} /></Swatched></Tool>
            <Tool label="阴影" caret icon="shadow" gap={7} />
            <Tool label="裁剪" caret icon="crop" gap={7} />
            <Tool label="线条颜色" caret gap={4}><Swatched $bar="#000"><Icon name="pen" size={18} /></Swatched></Tool>
            <Tool label="线型" caret icon="lineStyle" gap={7} />
            <Tool label="锁定" caret icon="lock" gap={7} />
          </ToolGrid>
          <Separator />
          <ToolGrid $cols="20px 28px" $gap={17} $pad="0 0 0 14px">
            <Tool label="查找"><Icon name="search" size={17} /></Tool>
            <Tool label="查找页面"><Icon name="docSearch" size={19} /></Tool>
            <Tool label="全选"><Icon name="selectAll" size={18} /></Tool>
            <Tool label="替换形状" caret off><Icon name="replace" size={18} /></Tool>
          </ToolGrid>
        </Ribbon>

        <Body>
          <Library>
            <LibraryHead>
              符号库
              <button aria-label="收起符号库"><Icon name="collapse" size={16} /></button>
            </LibraryHead>
            <SearchRow>
              <Tool label="符号库菜单" caret icon="tray" />
              <SearchBox>
                <input placeholder="搜索符号" aria-label="搜索符号" />
                <Icon name="search" size={16} />
              </SearchBox>
              <StepPair>
                <button aria-label="上一个"><Icon name="chevUp" size={12} /></button>
                <button aria-label="下一个"><Icon name="chevDown" size={12} /></button>
              </StepPair>
            </SearchRow>
            <LibraryBar>
              <Caret $size={5} />
              <LibraryName>我的库</LibraryName>
              <button aria-label="导入"><Icon name="importLib" size={12} /></button>
              <button aria-label="添加"><Icon name="plus" size={11} /></button>
              <button aria-label="关闭库"><Icon name="close" size={8} /></button>
            </LibraryBar>
            <LibraryItem aria-label="我的形状">
              <svg width="36" height="38" viewBox="0 0 36 38" fill="#fff" stroke="#222" aria-hidden="true">
                <path d="M16 1 33 8l2 18-14 11-17-7L1 12z" />
                <path d="M10.500 12.500h15v13h-15z" stroke="#444" />
                <path d="M20 22c2-3-1-6-3-5s-3 4-1 5 3-1 2-2" fill="none" strokeWidth="1.500" />
              </svg>
            </LibraryItem>
          </Library>

          <Doc>
            <DocTabs>
              <DocTab>
                <svg width="14" height="16" viewBox="0 0 14 16" aria-hidden="true">
                  <path d="M1 1h8l3 3v11H1z" fill={ACCENT} />
                  <path d="M3.500 5.500h3a2.500 2.500 0 0 1 0 5h-3M3.500 8h3" fill="none" stroke="#fff" strokeWidth="1.300" />
                  <circle cx="11" cy="13" r="2.800" fill="#f00" />
                </svg>
                <span>中华人民共和国</span>
                <button aria-label="关闭文档"><Icon name="close" size={8} /></button>
              </DocTab>
            </DocTabs>
            <Corner />
            <Ruler />
            <Ruler vertical />
            <MapDrawing />
            <VTrack><Thumb $w="10px" $h="258px" /></VTrack>
            <HTrack><Thumb $w="546px" $h="9px" /></HTrack>
            <TrackCorner />
            <Palette>
              <Icon name="bucket" size={16} />
              {SWATCHES.map((c, i) => <Chip key={i} $c={`#${c}`} aria-label={`#${c}`} />)}
            </Palette>
          </Doc>

          <Rail>
            <RailButton $kind="toggle" aria-label="收起面板"><Icon name="expand" size={15} /></RailButton>
            <RailButton $kind="active" aria-label="填充"><Icon name="bucket" size={21} /></RailButton>
            {RAIL.map(([icon, label]) => (
              <RailButton key={icon} aria-label={label}><Icon name={icon} size={19} /></RailButton>
            ))}
          </Rail>

          <section>
            <PanelTabs>
              <PanelTab $active>填充</PanelTab>
              <PanelTab $first>线条</PanelTab>
              <PanelTab>阴影</PanelTab>
            </PanelTabs>
            <RadioList>
              {FILLS.map((f, i) => (
                <RadioLabel key={f}>
                  <input type="radio" name="fill" checked={fill === i} onChange={() => setFill(i)} />
                  {f}
                </RadioLabel>
              ))}
            </RadioList>
            <Fields>
              <Field>颜色：<ColorButton aria-label="颜色" /></Field>
              <Amount id="light" label="亮度：" value={light - 40} position={light} onChange={setLight} />
              <Amount id="alpha" label="透明度：" value={alpha} position={alpha} onChange={setAlpha} />
            </Fields>
          </section>
        </Body>

        <Status>
          <PlainButton aria-label="页面列表"><Icon name="pages" size={22} /></PlainButton>
          <PageSelect><select aria-label="页面"><option>页-1</option></select><Caret /></PageSelect>
          <PageTab $active>页-1</PageTab>
          <PageTab>页-2</PageTab>
          <PageTab $last>页-3</PageTab>
          <PlainButton $before={3} aria-label="添加页面"><Icon name="add" size={16} /></PlainButton>
          <StatusRight>
            <ShapeId><span>形状 ID：</span><span>383</span></ShapeId>
            <PlainButton $after={2} aria-label="播放"><Icon name="play" size={20} /></PlainButton>
            <PlainButton aria-label="缩小"><Icon name="minus" size={14} /></PlainButton>
            <Range
              type="range" min={0} max={100} value={zoom} onChange={(e) => setZoom(Number(e.target.value))} aria-label="缩放"
              $fill="#bdbdbd" $rest="#dedede" $ring="#bdbdbd" $w={82}
              style={{ "--part": `${zoom}%` } as React.CSSProperties}
            />
            <PlainButton aria-label="放大"><Icon name="add" size={14} /></PlainButton>
            <ZoomValue>145%<Caret /></ZoomValue>
            <PlainButton $after={2} aria-label="全屏"><Icon name="full" size={18} /></PlainButton>
            <PlainButton aria-label="适合宽度"><Icon name="fitWidth" size={17} /></PlainButton>
          </StatusRight>
        </Status>
      </Frame>
    </Page>
  );
}
